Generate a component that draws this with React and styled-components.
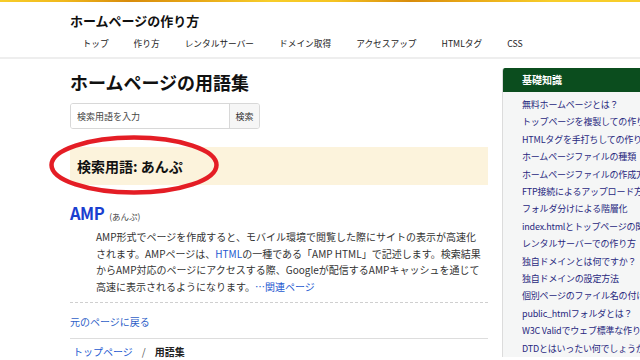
import styled, { createGlobalStyle } from "styled-components";

const GlobalStyle = createGlobalStyle`
  body {
    margin: 0;
    overflow: hidden;
    background: #fff;
    color: #222;
    font-family: "Noto Sans CJK JP", "Noto Sans", sans-serif;
  }
`;

const navItems = [
  "トップ",
  "作り方",
  "レンタルサーバー",
  "ドメイン取得",
  "アクセスアップ",
  "HTMLタグ",
  "CSS",
];

const sideLinks = [
  "無料ホームページとは？",
  "トップページを複製しての作り方",
  "HTMLタグを手打ちしての作り方",
  "ホームページファイルの種類",
  "ホームページファイルの作成方法",
  "FTP接続によるアップロード方法",
  "フォルダ分けによる階層化",
  "index.htmlとトップページの関係",
  "レンタルサーバーでの作り方",
  "独自ドメインとは何ですか？",
  "独自ドメインの設定方法",
  "個別ページのファイル名の付け方",
  "public_htmlフォルダとは？",
  "W3C Validでウェブ標準な作り方",
  "DTDとはいったい何でしょうか",
];

export default function App() {
  return (
    <>
      <GlobalStyle />
      <TopStripe />
      <Header>
        <SiteTitle>ホームページの作り方</SiteTitle>
        <Nav>
          {navItems.map((item) => (
            <NavItem key={item}>{item}</NavItem>
          ))}
        </Nav>
      </Header>

      <Layout>
        <MainColumn>
          <PageTitle>ホームページの用語集</PageTitle>
          <SearchForm>
            <SearchInput placeholder="検索用語を入力" />
            <SearchButton>検索</SearchButton>
          </SearchForm>

          <Highlight>
            検索用語: あんぷ
            <Circle viewBox="0 0 170 60">
              <ellipse cx="85" cy="30" rx="82.5" ry="27.5" />
            </Circle>
          </Highlight>

          <Entry>
            <EntryTitle>
              AMP<Reading>(あんぷ)</Reading>
            </EntryTitle>
            <EntryText>
              AMP形式でページを作成すると、モバイル環境で閲覧した際にサイトの表示が高速化
              <br />
              されます。AMPページは、<TextLink>HTML</TextLink>
              の一種である「AMP HTML」で記述します。検索結果
              <br />
              からAMP対応のページにアクセスする際、Googleが配信するAMPキャッシュを通じて
              <br />
              高速に表示されるようになります。<TextLink>…関連ページ</TextLink>
            </EntryText>
          </Entry>

          <BackLink>元のページに戻る</BackLink>

          <Breadcrumb>
            <TextLink>トップページ</TextLink>
            <Slash>/</Slash>
            <Current>用語集</Current>
          </Breadcrumb>
        </MainColumn>

        <Sidebar>
          <SideHeader>基礎知識</SideHeader>
          <SideList>
            {sideLinks.map((link) => (
              <SideItem key={link}>{link}</SideItem>
            ))}
          </SideList>
        </Sidebar>
      </Layout>
    </>
  );
}

const TopStripe = styled.div`
  height: 2px;
  background: linear-gradient(
    90deg,
    #f7cd2a 0%,
    #f0b81c 10%,
    #d88c0c 20%,
    #e6a516 30%,
    #f7cd2a 42%,
    #f5c422 52%,
    #d88c0c 64%,
    #e9aa18 74%,
    #f7cd2a 86%,
    #f7cd2a 100%
  );
`;

const Header = styled.header`
  padding: 9px 0 4px 70px;
  border-bottom: 2px solid #eeeeee;
`;

const SiteTitle = styled.div`
  font-size: 13px;
  font-weight: 700;
  line-height: 20px;
  color: #111;
`;

const Nav = styled.nav`
  display: flex;
  margin-top: 4px;
`;

const NavItem = styled.span`
  padding: 0 12.5px;
  font-size: 8.7px;
  line-height: 18px;
  color: #222;
`;

const Layout = styled.div`
  display: grid;
  grid-template-columns: 418px 200px;
  column-gap: 14px;
  padding-left: 70px;
  align-items: start;
`;

const MainColumn = styled.main`
  display: flex;
  flex-direction: column;
`;

const PageTitle = styled.h1`
  margin: 11px 0 0;
  font-size: 18px;
  line-height: 24px;
  font-weight: 700;
  color: #111;
`;

const SearchForm = styled.div`
  display: flex;
  width: 190px;
  height: 26px;
  margin-top: 9px;
  border: 1px solid #d8d8d8;
  border-radius: 3px;
  box-sizing: border-box;
  overflow: hidden;
`;

const SearchInput = styled.input`
  flex: 1;
  min-width: 0;
  border: none;
  padding: 0 6px;
  font-family: inherit;
  font-size: 9px;
  color: #333;
  outline: none;

  &::placeholder {
    color: #444;
  }
`;

const SearchButton = styled.button`
  width: 30px;
  border: none;
  border-left: 1px solid #d8d8d8;
  background: #f6f6f6;
  font-family: inherit;
  font-size: 9px;
  color: #333;
  padding: 0;
`;

const Highlight = styled.div`
  position: relative;
  margin-top: 18px;
  height: 38px;
  padding-left: 7px;
  background: #fcf3dc;
  font-size: 14px;
  font-weight: 700;
  line-height: 38px;
  color: #111;
`;

const Circle = styled.svg`
  position: absolute;
  left: -21px;
  top: -12px;
  width: 170px;
  height: 60px;
  overflow: visible;

  ellipse {
    fill: none;
    stroke: #e41d25;
    stroke-width: 4.5;
  }
`;

const Entry = styled.section`
  margin-top: 17px;
  padding-bottom: 7px;
  border-bottom: 1px dashed #cfcfcf;
`;

const EntryTitle = styled.h2`
  margin: 0;
  font-size: 16.5px;
  line-height: 22px;
  font-weight: 700;
  letter-spacing: -0.5px;
  color: #1a3fd0;
`;

const Reading = styled.span`
  margin-left: 5px;
  font-size: 8.5px;
  font-weight: 400;
  letter-spacing: 0;
  color: #444;
`;

const EntryText = styled.p`
  margin: 2px 0 0;
  padding-left: 26px;
  font-size: 10px;
  line-height: 16.5px;
  color: #333;
  white-space: nowrap;
`;

const TextLink = styled.a`
  color: #2458d0;
  text-decoration: none;
`;

const BackLink = styled.a`
  display: block;
  margin-top: 11px;
  padding-bottom: 8px;
  border-bottom: 1px solid #dddddd;
  font-size: 10px;
  line-height: 16px;
  color: #2f5fc8;
`;

const Breadcrumb = styled.div`
  margin-top: 4px;
  padding-left: 3px;
  font-size: 10px;
  line-height: 18px;
`;

const Slash = styled.span`
  margin: 0 9px;
  color: #555;
`;

const Current = styled.span`
  font-weight: 700;
  color: #222;
`;

const Sidebar = styled.aside`
  margin-top: 9px;
  background: #f5f6f6;
  border-left: 1px solid #dcdcdc;
  border-radius: 3px 0 0 0;
  overflow: hidden;
`;

const SideHeader = styled.div`
  height: 24px;
  padding-left: 19px;
  background: #0b4d1e;
  color: #fff;
  font-size: 10px;
  font-weight: 700;
  line-height: 24px;
`;

const SideList = styled.ul`
  list-style: none;
  margin: 0;
  padding: 4px 0 0 19px;
`;

const SideItem = styled.li`
  font-size: 9px;
  line-height: 17.4px;
  color: #28287e;
  white-space: nowrap;
  letter-spacing: -0.2px;
`;
